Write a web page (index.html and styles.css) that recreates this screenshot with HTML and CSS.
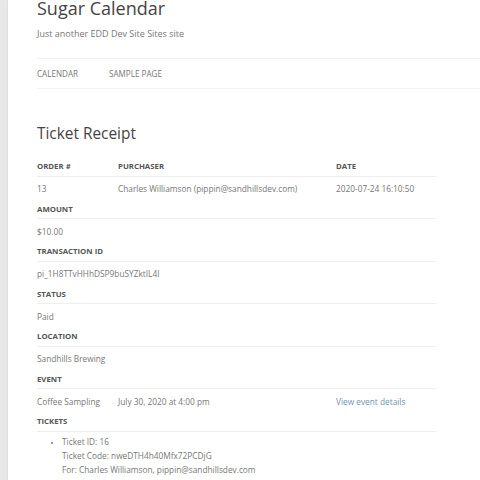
FILE: index.html
```html
<!DOCTYPE html>
<html>
<head>
<meta charset="utf-8">
<link rel="stylesheet" href="styles.css">
</head>
<body>
<div class="page">
  <div class="strip"></div>
  <div class="site">
    <header class="site-header">
      <div class="site-title">Sugar Calendar</div>
      <div class="site-desc">Just another EDD Dev Site Sites site</div>
      <nav class="nav">
        <a class="nav-item">CALENDAR</a>
        <a class="nav-item">SAMPLE PAGE</a>
      </nav>
    </header>
    <main class="content">
      <h1 class="entry-title">Ticket Receipt</h1>
      <table class="receipt">
        <colgroup><col class="c1"><col class="c2"><col class="c3"></colgroup>
        <tr class="th-row"><th>ORDER #</th><th>PURCHASER</th><th>DATE</th></tr>
        <tr class="td-row"><td>13</td><td>Charles Williamson (pippin@sandhillsdev.com)</td><td>2020-07-24 16:10:50</td></tr>
        <tr class="th-row"><th colspan="3">AMOUNT</th></tr>
        <tr class="td-row"><td colspan="3">$10.00</td></tr>
        <tr class="th-row"><th colspan="3">TRANSACTION ID</th></tr>
        <tr class="td-row"><td colspan="3">pi_1H8TTvHHhDSP9buSYZktIL4I</td></tr>
        <tr class="th-row"><th colspan="3">STATUS</th></tr>
        <tr class="td-row"><td colspan="3">Paid</td></tr>
        <tr class="th-row"><th colspan="3">LOCATION</th></tr>
        <tr class="td-row"><td colspan="3">Sandhills Brewing</td></tr>
        <tr class="th-row"><th colspan="3">EVENT</th></tr>
        <tr class="td-row"><td>Coffee Sampling</td><td>July 30, 2020 at 4:00 pm</td><td><a class="link">View event details</a></td></tr>
        <tr class="th-row"><th colspan="3">TICKETS</th></tr>
        <tr class="td-row"><td colspan="3" class="tickets-cell">
          <ul class="tickets">
            <li>Ticket ID: 16<br>Ticket Code: nweDTH4h40Mfx72PCDjG<br>For: Charles Williamson, pippin@sandhillsdev.com</li>
          </ul>
        </td></tr>
      </table>
    </main>
  </div>
</div>
</body>
</html>
```
FILE: styles.css
```css
html, body {
  margin: 0;
  padding: 0;
  background: #fff;
  overflow: hidden;
}
body {
  font-family: "Open Sans", "Liberation Sans", sans-serif;
  color: #777;
}
.page {
  display: flex;
  min-height: 480px;
}
.strip {
  width: 8px;
  flex: none;
  background: #e8e8e8;
  box-shadow: inset -1px 0 1px rgba(0,0,0,0.04);
}
.site {
  flex: 1;
  padding-left: 29px;
  min-width: 0;
}
.site-title {
  font-size: 18px;
  line-height: 16px;
  color: #444;
}
.site-desc {
  font-size: 9px;
  line-height: 12px;
  color: #777;
  margin-top: 12px;
}
.nav {
  margin-top: 17.5px;
  border-top: 1.5px solid #f0f0f0;
  border-bottom: 1.5px solid #f3f3f3;
  height: 29.5px;
  display: flex;
  align-items: center;
  gap: 31px;
}
.nav-item {
  font-size: 8.1px;
  color: #777;
}
.content {
  width: 399px;
  padding-top: 34.5px;
}
.entry-title {
  margin: 0;
  font-weight: 400;
  font-size: 15.4px;
  line-height: 20px;
  color: #444;
}
.receipt {
  margin-top: 12.5px;
  width: 100%;
  border-collapse: collapse;
  font-size: 8.3px;
}
.c1 { width: 81px; }
.c2 { width: 218px; }
.receipt th {
  text-align: left;
  font-weight: 700;
  font-size: 7.8px;
  color: #555;
  line-height: 13px;
  padding: 4px 0 2.5px;
  border-bottom: 1px solid #eee;
}
.receipt td {
  line-height: 13px;
  padding: 5.5px 0 3.5px;
  color: #777;
  vertical-align: top;
  white-space: nowrap;
}
.receipt td.tickets-cell {
  padding-top: 3.5px;
}
.link {
  color: #6e93b5;
}
.tickets {
  margin: 0;
  padding-left: 25px;
  line-height: 14px;
  list-style: disc;
}
.tickets li::marker {
  font-size: 6.5px;
}
```
